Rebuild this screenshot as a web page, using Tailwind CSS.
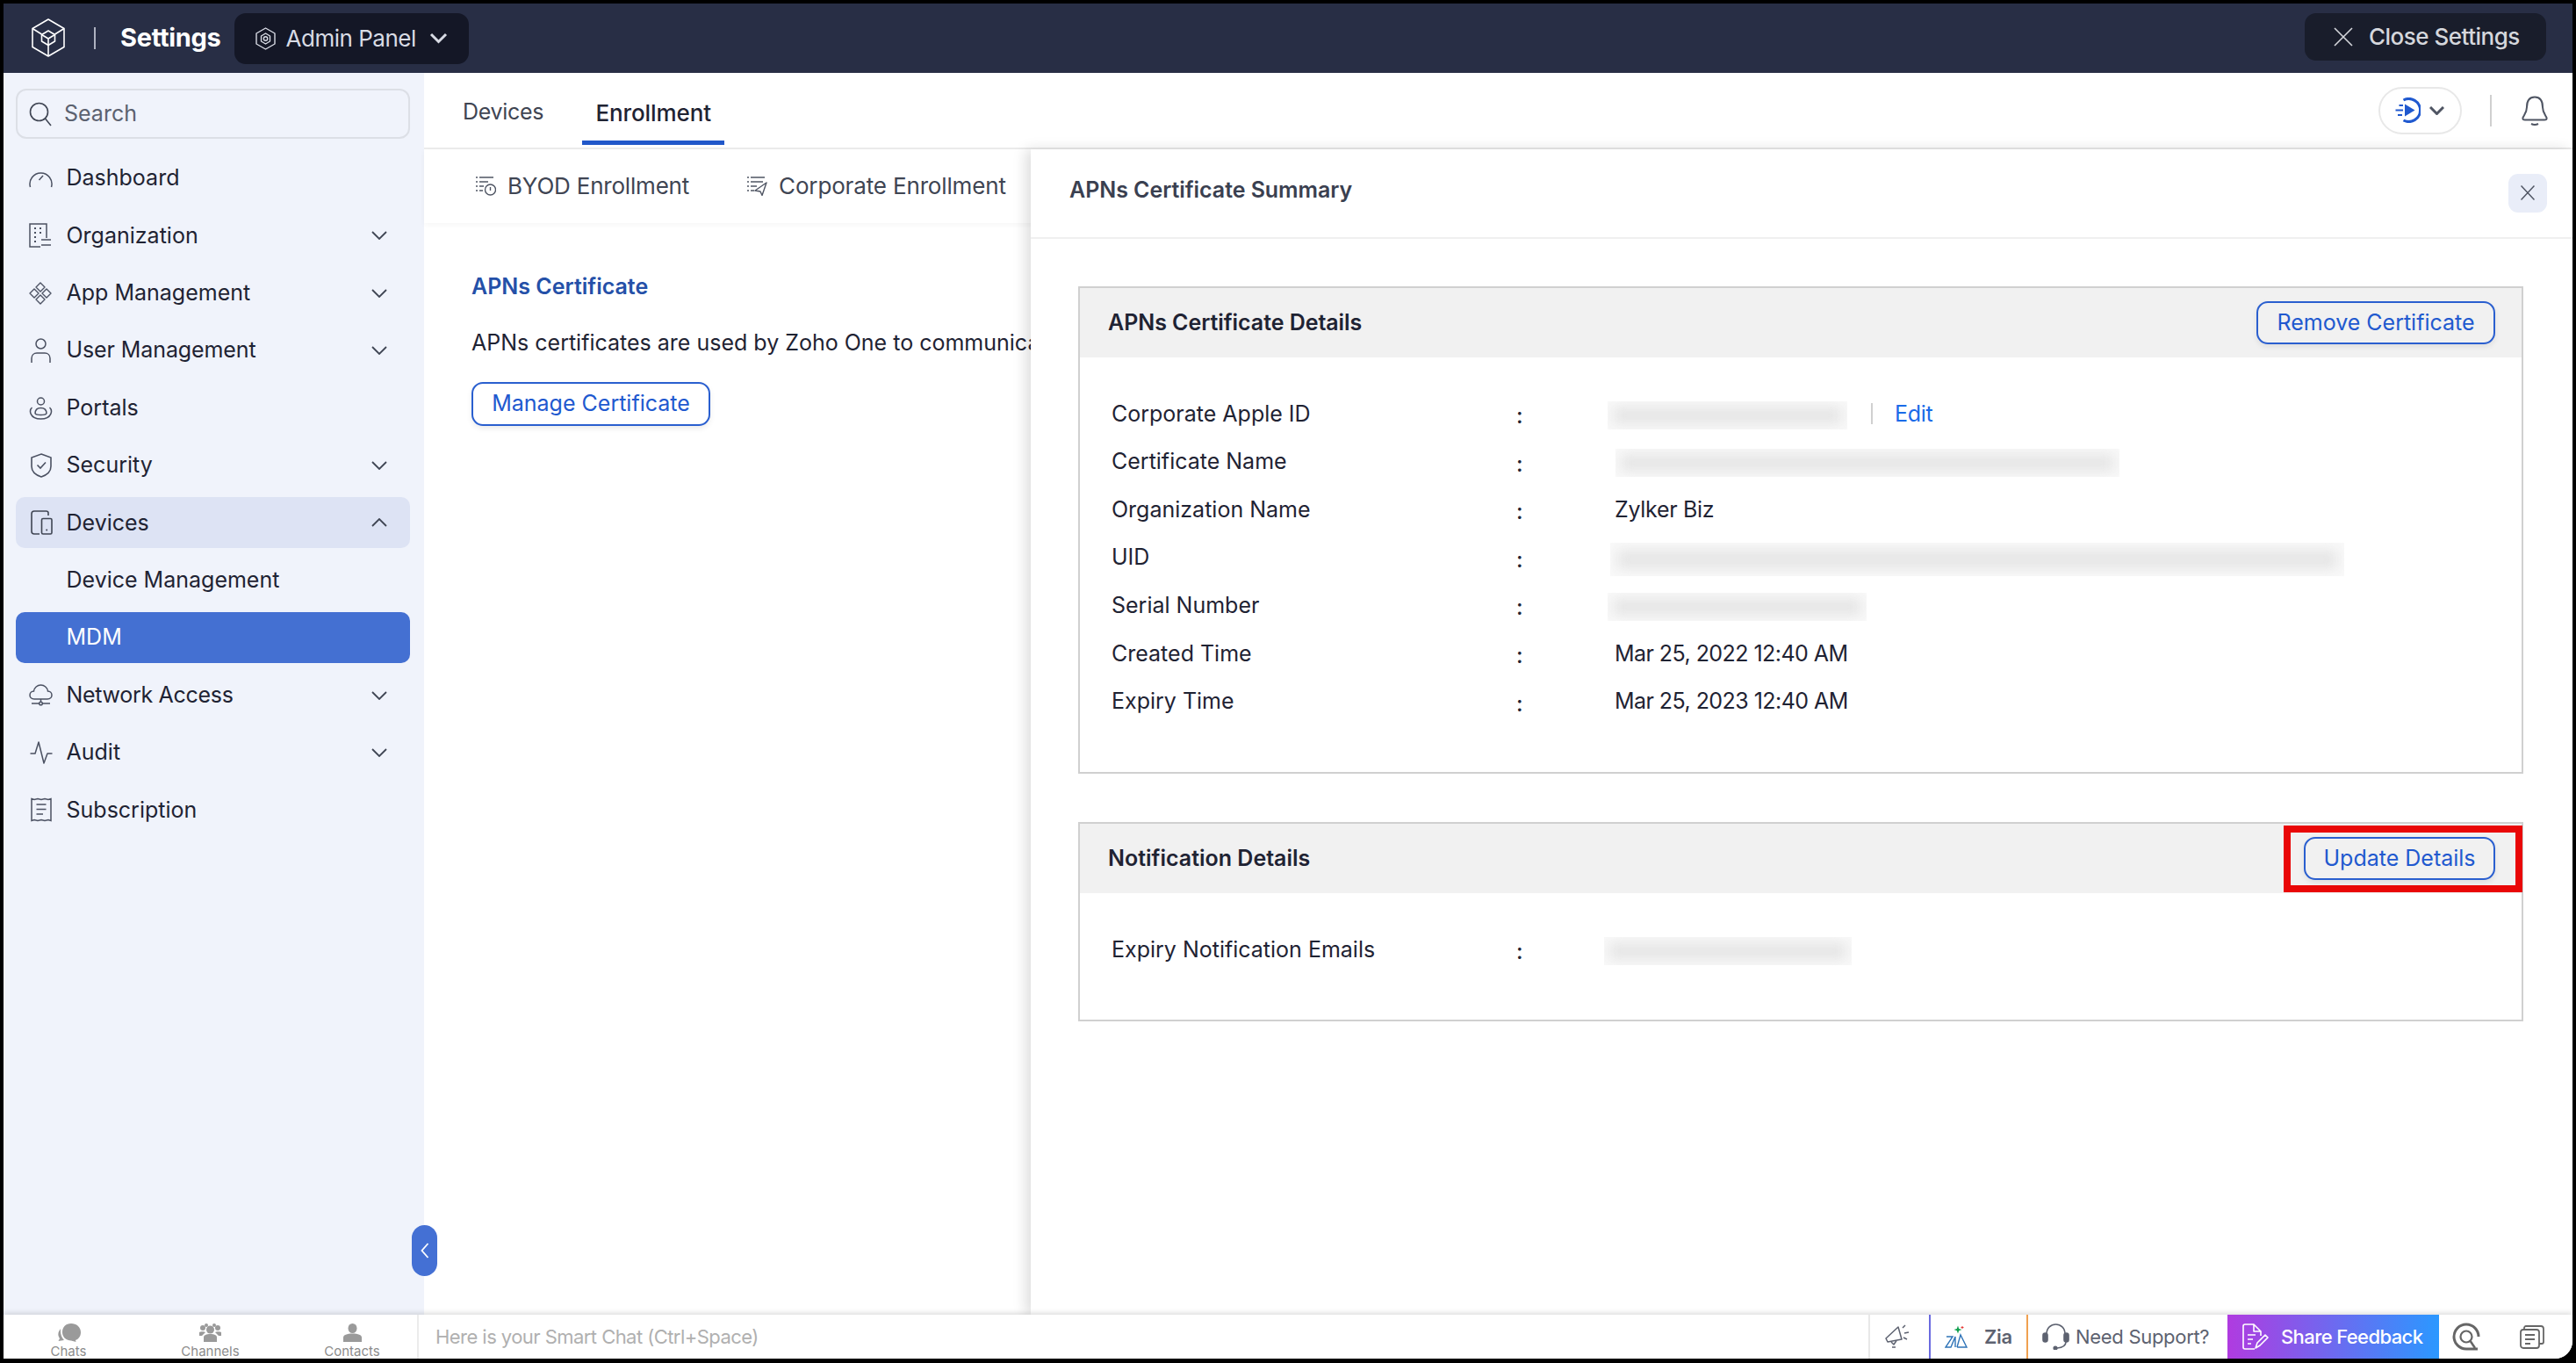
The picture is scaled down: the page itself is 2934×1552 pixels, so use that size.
<!DOCTYPE html>
<html lang="en">
<head>
    <meta charset="UTF-8">
    <title>Settings - MDM</title>
    <script src="https://cdn.jsdelivr.net/npm/@tailwindcss/browser@4"></script>
</head>
<body class="bg-black w-[2934px] h-[1552px] overflow-hidden pt-[4px] pl-[4px] pr-[4px] pb-[5px] font-['Inter',sans-serif] text-[25px] text-[#1f2333]">
<div class="h-full flex flex-col bg-white overflow-hidden rounded-br-[20px]">

    <!-- Top bar -->
    <header class="h-[79px] shrink-0 bg-[#282e45] flex items-center text-white">
        <svg class="ml-[32px] w-[38px] h-[44px] -mt-[2px]" viewBox="0 0 38 44" fill="none" stroke="#fff" stroke-width="1.6" stroke-linejoin="round">
            <path d="M19 1L37 11.5V32.5L19 43L1 32.5V11.5Z"/>
            <path d="M1 11.5L11.5 18M37 11.5L26.5 18M19 43V30.5"/>
            <path d="M19 14L26.5 18.5V26L19 30.5L11.5 26V18.5Z"/>
            <path d="M11.5 18.5L19 23L26.5 18.5M19 23V30.5"/>
        </svg>
        <div class="ml-[33px] w-[2px] h-[25px] bg-[#aeb2c0]"></div>
        <div class="ml-[28px] text-[29px] font-bold tracking-[-0.3px] -mt-[1px]">Settings</div>
        <div class="ml-[15px] w-[267px] h-[58px] rounded-[13px] bg-[#141726] flex items-center pl-[24px] text-[#d8dbe4] text-[26px]">
            <svg class="w-[23px] h-[26px]" viewBox="0 0 23 26" fill="none" stroke="#d8dbe4" stroke-width="1.4" stroke-linejoin="round">
                <path d="M11.5 1L22 7V19L11.5 25L1 19V7Z"/>
                <path d="M11.5 7L16.5 10V16L11.5 19L6.5 16V10Z"/>
                <circle cx="11.5" cy="13" r="2.2"/>
            </svg>
            <span class="ml-[12px] tracking-[-0.5px]">Admin Panel</span>
            <svg class="ml-[15px] w-[21px] h-[13px]" viewBox="0 0 21 13" fill="none" stroke="#d8dbe4" stroke-width="3"><path d="M2 2L10.5 10.5L19 2"/></svg>
        </div>
        <div class="ml-auto mr-[30px] w-[275px] h-[54px] -mt-[4px] rounded-[13px] bg-[#191d2b] flex items-center pl-[33px] text-[#d5d7dc] text-[26px] font-medium">
            <svg class="w-[22px] h-[22px]" viewBox="0 0 22 22" fill="none" stroke="#d5d7dc" stroke-width="1.6"><path d="M1 1L21 21M21 1L1 21"/></svg>
            <span class="ml-[18px] tracking-[-0.5px]">Close Settings</span>
        </div>
    </header>

    <div class="flex-1 flex min-h-0">
        <!-- Sidebar -->
        <aside class="w-[479px] shrink-0 bg-[#f0f3fb] pt-[18px] px-[14px]">
            <div class="w-[449px] h-[57px] border-2 border-[#dcdfe6] rounded-[12px] flex items-center pl-[13px] text-[#5c6270]">
                <svg class="w-[26px] h-[28px]" viewBox="0 0 26 28" fill="none" stroke="#3f4553" stroke-width="1.6"><circle cx="11.5" cy="11.5" r="10"/><path d="M18.5 19L25 27"/></svg>
                <span class="ml-[14px]">Search</span>
            </div>
            <nav class="mt-[16px] flex flex-col gap-[7.4px] w-[449px]">
                <div class="h-[58px] flex items-center rounded-[10px] pl-[15px]">
                    <span class="w-[42.5px] shrink-0">
                        <svg class="w-[27px] h-[22px]" viewBox="0 0 27 22" fill="none" stroke="#4b5162" stroke-width="1.5"><path d="M1.5 21A12.5 12.5 0 1 1 25.5 21"/><path d="M11.5 13L16 8"/></svg>
                    </span>
                    <span>Dashboard</span>
                </div>
                <div class="h-[58px] flex items-center rounded-[10px] pl-[15px]">
                    <span class="w-[42.5px] shrink-0">
                        <svg class="w-[26px] h-[28px]" viewBox="0 0 26 28" fill="none" stroke="#4b5162" stroke-width="1.5"><path d="M20 17V1H1V27H13"/><path d="M6 6h2M12 6h2M6 11h2M12 11h2M6 16h2M6 21h2" stroke-width="2.2"/><path d="M14 19h11M14 25h11" /></svg>
                    </span>
                    <span>Organization</span>
                    <svg class="ml-auto mr-[26px] w-[18px] h-[10px]" viewBox="0 0 18 10" fill="none" stroke="#3f4553" stroke-width="1.8"><path d="M1 1L9 9L17 1"/></svg>
                </div>
                <div class="h-[58px] flex items-center rounded-[10px] pl-[15px]">
                    <span class="w-[42.5px] shrink-0">
                        <svg class="w-[26px] h-[26px]" viewBox="0 0 26 26" fill="none" stroke="#4b5162" stroke-width="1.4" stroke-linejoin="round"><path d="M13 1L18 6L13 11L8 6Z"/><path d="M13 15L18 20L13 25L8 20Z"/><path d="M6 8L11 13L6 18L1 13Z"/><path d="M20 8L25 13L20 18L15 13Z"/></svg>
                    </span>
                    <span>App Management</span>
                    <svg class="ml-auto mr-[26px] w-[18px] h-[10px]" viewBox="0 0 18 10" fill="none" stroke="#3f4553" stroke-width="1.8"><path d="M1 1L9 9L17 1"/></svg>
                </div>
                <div class="h-[58px] flex items-center rounded-[10px] pl-[15px]">
                    <span class="w-[42.5px] shrink-0">
                        <svg class="ml-[2px] w-[23px] h-[28px]" viewBox="0 0 23 28" fill="none" stroke="#4b5162" stroke-width="1.5"><circle cx="11.5" cy="6.5" r="5.5"/><path d="M1 28V23C1 19.5 3.5 17 7 17H16C19.5 17 22 19.5 22 23V28"/></svg>
                    </span>
                    <span class="tracking-[-0.1px]">User Management</span>
                    <svg class="ml-auto mr-[26px] w-[18px] h-[10px]" viewBox="0 0 18 10" fill="none" stroke="#3f4553" stroke-width="1.8"><path d="M1 1L9 9L17 1"/></svg>
                </div>
                <div class="h-[58px] flex items-center rounded-[10px] pl-[15px]">
                    <span class="w-[42.5px] shrink-0">
                        <svg class="w-[27px] h-[26px]" viewBox="0 0 27 26" fill="none" stroke="#4b5162" stroke-width="1.5"><circle cx="13.5" cy="5" r="4"/><path d="M7 19C7 15 9.5 12.5 13.5 12.5C17.5 12.5 20 15 20 19"/><path d="M7 19C9 21 18 21 20 19"/><path d="M3.5 12C0 15 0.5 25 13.5 25C26.5 25 27 15 23.5 12"/></svg>
                    </span>
                    <span>Portals</span>
                </div>
                <div class="h-[58px] flex items-center rounded-[10px] pl-[15px]">
                    <span class="w-[42.5px] shrink-0">
                        <svg class="ml-[2px] w-[24px] h-[28px]" viewBox="0 0 24 28" fill="none" stroke="#4b5162" stroke-width="1.6"><path d="M12 1L23 5V15C23 21 18 25 12 27C6 25 1 21 1 15V5Z"/><path d="M7.5 13.5L11 17L17 10.5"/></svg>
                    </span>
                    <span>Security</span>
                    <svg class="ml-auto mr-[26px] w-[18px] h-[10px]" viewBox="0 0 18 10" fill="none" stroke="#3f4553" stroke-width="1.8"><path d="M1 1L9 9L17 1"/></svg>
                </div>
                <div class="h-[58px] flex items-center rounded-[10px] pl-[15px] bg-[#dde3f4]">
                    <span class="w-[42.5px] shrink-0">
                        <svg class="ml-[2px] w-[25px] h-[28px]" viewBox="0 0 25 28" fill="none" stroke="#3f4553" stroke-width="1.6"><path d="M20 6V3C20 2 19 1 17.5 1H4C2 1 1 2 1 4V24C1 26 2 27 4 27H10"/><rect x="12.5" y="9.5" width="11.5" height="17.5" rx="1.5"/><circle cx="18.2" cy="22.5" r="1" fill="#3f4553" stroke="none"/></svg>
                    </span>
                    <span>Devices</span>
                    <svg class="ml-auto mr-[26px] w-[18px] h-[10px]" viewBox="0 0 18 10" fill="none" stroke="#3f4553" stroke-width="1.8"><path d="M1 9L9 1L17 9"/></svg>
                </div>
                <div class="h-[58px] flex items-center rounded-[10px] pl-[57.5px]">
                    <span>Device Management</span>
                </div>
                <div class="h-[58px] flex items-center rounded-[10px] pl-[57.5px] bg-[#4470d2] text-white">
                    <span>MDM</span>
                </div>
                <div class="h-[58px] flex items-center rounded-[10px] pl-[15px]">
                    <span class="w-[42.5px] shrink-0">
                        <svg class="w-[27px] h-[25px]" viewBox="0 0 27 25" fill="none" stroke="#4b5162" stroke-width="1.5"><path d="M6 17C2.5 17 1 14.5 1 12.5C1 10 3 8 5.5 8C6 4 9.5 1 13.5 1C17.5 1 21 4 21.5 8C24 8 26 10 26 12.5C26 14.5 24.5 17 21 17Z"/><path d="M13.5 17V21M3 22H24"/><circle cx="13.5" cy="22" r="1.8" fill="#f0f3fb"/></svg>
                    </span>
                    <span class="tracking-[-0.3px]">Network Access</span>
                    <svg class="ml-auto mr-[26px] w-[18px] h-[10px]" viewBox="0 0 18 10" fill="none" stroke="#3f4553" stroke-width="1.8"><path d="M1 1L9 9L17 1"/></svg>
                </div>
                <div class="h-[58px] flex items-center rounded-[10px] pl-[15px]">
                    <span class="w-[42.5px] shrink-0">
                        <svg class="ml-[1px] w-[26px] h-[26px]" viewBox="0 0 26 26" fill="none" stroke="#4b5162" stroke-width="1.5" stroke-linejoin="round"><path d="M0.5 14H6L10 1L16 25L20 14H25.5"/></svg>
                    </span>
                    <span>Audit</span>
                    <svg class="ml-auto mr-[26px] w-[18px] h-[10px]" viewBox="0 0 18 10" fill="none" stroke="#3f4553" stroke-width="1.8"><path d="M1 1L9 9L17 1"/></svg>
                </div>
                <div class="h-[58px] flex items-center rounded-[10px] pl-[15px]">
                    <span class="w-[42.5px] shrink-0">
                        <svg class="ml-[2px] w-[24px] h-[28px]" viewBox="0 0 24 28" fill="none" stroke="#4b5162" stroke-width="1.5"><path d="M1 1.5L4 2.5L8 1.5L12 2.5L16 1.5L20 2.5L23 1.5V26.5L20 25.5L16 26.5L12 25.5L8 26.5L4 25.5L1 26.5Z"/><path d="M6.5 8H17.5M6.5 13.5H17.5M6.5 19H14"/></svg>
                    </span>
                    <span>Subscription</span>
                </div>
            </nav>
        </aside>

        <!-- Main area -->
        <main class="relative flex-1 min-w-0">
            <div class="h-[87px] border-b-2 border-[#ececec] flex items-stretch pl-[44px]">
                <div class="flex items-center pt-[5px] text-[#3f4553] tracking-[-0.3px]">Devices</div>
                <div class="ml-[44px] w-[162px] mb-[3px] pt-[13px] border-b-[5px] border-[#2157c9] flex items-center justify-center font-medium text-[26px] tracking-[-0.1px]">Enrollment</div>
                <div class="ml-auto mr-[28px] flex items-center">
                    <div class="w-[95px] h-[54px] rounded-full border-2 border-[#e8e8e8] flex items-center pl-[17px]">
                        <svg class="w-[29px] h-[29px]" viewBox="0 0 29 29" fill="none" stroke="#2059cf"><path d="M9.5 3A13 13 0 1 1 9.5 26" stroke-width="3"/><path d="M11 7.5L22.5 14.5L11 21.5Z" fill="#2059cf" stroke="none"/><path d="M4.5 9H9M0.5 14.5H9M3 20H8" stroke-width="2"/></svg>
                        <svg class="ml-[10px] w-[17px] h-[10px]" viewBox="0 0 17 10" fill="none" stroke="#4f5563" stroke-width="3"><path d="M1 1L8.5 8.5L16 1"/></svg>
                    </div>
                    <div class="ml-[32px] w-[2px] h-[36px] bg-[#d0d0d0]"></div>
                    <svg class="ml-[34px] w-[30px] h-[34px]" viewBox="0 0 30 34" fill="none" stroke="#4f5563" stroke-width="2"><path d="M15 1.5C8 1.5 6 7 6 13C6 19 3 22 1.5 25C1 27 2 27.5 4 27.5H26C28 27.5 29 27 28.5 25C27 22 24 19 24 13C24 7 22 1.5 15 1.5Z"/><path d="M11 32Q15 34 19 32"/></svg>
                </div>
            </div>

            <div class="h-[84px] pb-[2px] flex items-center pl-[59px] text-[#3f4553] text-[26px] shadow-[0_2px_6px_rgba(0,0,0,0.04)]">
                <svg class="w-[23px] h-[22px] mt-[2px]" viewBox="0 0 23 22" fill="none" stroke="#4f5563" stroke-width="1.4"><path d="M0 1H2M4 1H20M0 6H2M4 6H14M0 11H2M4 11H9M0 16H2M4 16H8"/><circle cx="16.5" cy="15" r="6"/><path d="M16.5 12V16"/></svg>
                <span class="ml-[13px] tracking-[-0.2px]">BYOD Enrollment</span>
                <svg class="ml-[66px] w-[23px] h-[22px] mt-[2px]" viewBox="0 0 23 22" fill="none" stroke="#4f5563" stroke-width="1.4" stroke-linejoin="round"><path d="M0 1H2M4 1H20M0 6H2M4 6H18M0 11H2M4 11H11M0 16H2M4 16H8"/><path d="M22 7L9 16L15 17L17 21.5Z"/></svg>
                <span class="ml-[13px] tracking-[-0.15px]">Corporate Enrollment</span>
            </div>

            <div class="pt-[54px] pl-[54px] whitespace-nowrap">
                <div class="font-semibold text-[#2450a8]">APNs Certificate</div>
                <div class="mt-[26px]">APNs certificates are used by Zoho One to communicate with Apple devices.</div>
                <div class="mt-[26px] w-[272px] h-[50px] rounded-[13px] border-2 border-[#2a5fcf] text-[#2159cf] flex items-center justify-center shadow-[0_3px_6px_rgba(0,0,0,0.08)]">Manage Certificate</div>
            </div>

            <!-- Collapse handle -->
            <div class="absolute left-[-14px] top-[1312px] w-[29px] h-[58px] rounded-full bg-[#4470d4] flex items-center justify-center">
                <svg class="w-[10px] h-[18px]" viewBox="0 0 10 18" fill="none" stroke="#fff" stroke-width="1.8"><path d="M8.5 1L1.5 9L8.5 17"/></svg>
            </div>

            <!-- Summary panel -->
            <section class="absolute left-[691px] top-[87px] right-0 bottom-0 bg-white shadow-[-6px_0_14px_rgba(0,0,0,0.13)]">
                <div class="h-[102px] border-b-2 border-[#f0f0f0] flex items-center justify-between pl-[44px] pr-[29px]">
                    <span class="font-semibold text-[#3a4050] tracking-[-0.05px] -mt-[7px]">APNs Certificate Summary</span>
                    <div class="w-[44px] h-[44px] rounded-[11px] bg-[#e9edf8] flex items-center justify-center -mt-[1px]">
                        <svg class="w-[16px] h-[17px]" viewBox="0 0 16 17" fill="none" stroke="#4f5563" stroke-width="1.5"><path d="M0.5 0.5L15.5 16.5M15.5 0.5L0.5 16.5"/></svg>
                    </div>
                </div>

                <div class="pt-[54px] pl-[54px] pr-[56px] flex flex-col gap-[55px]">
                    <div class="h-[555px] border-2 border-[#d0d0d0]">
                        <div class="h-[79px] bg-[#f1f1f1] flex items-center justify-between pl-[32px] pr-[30px]">
                            <span class="font-semibold tracking-[-0.05px]">APNs Certificate Details</span>
                            <div class="w-[272px] h-[49px] rounded-[13px] border-2 border-[#2a5fcf] text-[#2159cf] flex items-center justify-center shadow-[0_3px_6px_rgba(0,0,0,0.08)]">Remove Certificate</div>
                        </div>
                        <div class="pt-[37px] pl-[36px] grid grid-cols-[461px_113px_1fr] auto-rows-[54.6px] items-center">
                            <div>Corporate Apple ID</div>
                            <div class="mt-[5px] font-medium">:</div>
                            <div class="flex items-center -ml-[9px]">
                                <div class="w-[273px] h-[32px] overflow-hidden bg-[#f9f9f9] mt-[3px]"><div class="m-[6px] h-[20px] bg-[#e6e6e6] blur-[7px]"></div></div>
                                <div class="ml-[27px] w-[2px] h-[24px] bg-[#d0d0d0]"></div>
                                <span class="ml-[25px] text-[#1a6be8] tracking-[-0.3px]">Edit</span>
                            </div>
                            <div>Certificate Name</div>
                            <div class="mt-[5px] font-medium">:</div>
                            <div class="w-[574px] h-[32px] overflow-hidden bg-[#f9f9f9] mt-[3px]"><div class="m-[6px] h-[20px] bg-[#e6e6e6] blur-[7px]"></div></div>
                            <div>Organization Name</div>
                            <div class="mt-[5px] font-medium">:</div>
                            <div class="-ml-[1px] tracking-[-0.3px]">Zylker Biz</div>
                            <div>UID</div>
                            <div class="mt-[5px] font-medium">:</div>
                            <div class="-ml-[6px] w-[836px] h-[38px] overflow-hidden bg-[#f9f9f9] mt-[3px]"><div class="m-[8px] h-[22px] bg-[#e6e6e6] blur-[7px]"></div></div>
                            <div>Serial Number</div>
                            <div class="mt-[5px] font-medium">:</div>
                            <div class="-ml-[9px] w-[295px] h-[32px] overflow-hidden bg-[#f9f9f9] mt-[3px]"><div class="m-[6px] h-[20px] bg-[#e6e6e6] blur-[7px]"></div></div>
                            <div>Created Time</div>
                            <div class="mt-[5px] font-medium">:</div>
                            <div class="-ml-[1px] tracking-[-0.55px]">Mar 25, 2022 12:40 AM</div>
                            <div>Expiry Time</div>
                            <div class="mt-[5px] font-medium">:</div>
                            <div class="-ml-[1px] tracking-[-0.55px]">Mar 25, 2023 12:40 AM</div>
                        </div>
                    </div>

                    <div class="h-[227px] border-2 border-[#d0d0d0]">
                        <div class="relative h-[79px] bg-[#f1f1f1] flex items-center justify-between pl-[32px] pr-[30px]">
                            <span class="font-semibold">Notification Details</span>
                            <div class="w-[218px] h-[49px] rounded-[13px] border-2 border-[#2a5fcf] text-[#2159cf] flex items-center justify-center shadow-[0_3px_6px_rgba(0,0,0,0.08)]">Update Details</div>
                            <!-- Red callout -->
                            <div class="absolute top-[2px] right-[-1px] w-[272px] h-[76px] border-[8px] border-[#e90707]"></div>
                        </div>
                        <div class="pt-[37px] pl-[36px] grid grid-cols-[461px_113px_1fr] auto-rows-[54.6px] items-center">
                            <div>Expiry Notification Emails</div>
                            <div class="mt-[5px] font-medium">:</div>
                            <div class="-ml-[13px] w-[282px] h-[32px] overflow-hidden bg-[#f9f9f9] mt-[3px]"><div class="m-[6px] h-[20px] bg-[#e6e6e6] blur-[7px]"></div></div>
                        </div>
                    </div>
                </div>
            </section>
        </main>
    </div>

    <!-- Bottom bar -->
    <footer class="relative z-10 h-[50px] shrink-0 bg-white flex shadow-[0_-2px_6px_rgba(0,0,0,0.14)]">
        <div class="w-[473px] shrink-0 border-r-2 border-[#ececec] flex gap-[13.5px] text-[15px] leading-[16px] text-[#8c8c8c]">
            <div class="w-[148px] flex flex-col items-center pt-[10px]">
                <svg class="w-[27px] h-[21px]" viewBox="0 0 27 21" fill="#9a9a9a"><path d="M16 0C22 0 27 4 27 10C27 15 24 18 21 19L21.5 21L16 19.5C10 19.5 6 15 6 10C6 4 10 0 16 0Z"/><path d="M4 6C1.5 9 0 13 3 17L1.5 20L8 19C5 16 3.5 11 4 6Z"/></svg>
                <span class="mt-[3px]">Chats</span>
            </div>
            <div class="w-[148px] flex flex-col items-center pt-[10px]">
                <svg class="w-[25px] h-[21px]" viewBox="0 0 25 21" fill="#9a9a9a"><circle cx="12.5" cy="7" r="4.5"/><circle cx="4" cy="5" r="3"/><circle cx="21" cy="5" r="3"/><circle cx="8" cy="2" r="2"/><circle cx="17" cy="2" r="2"/><path d="M5 21V16C5 13 8 12 12.5 12C17 12 20 13 20 16V21Z"/><path d="M0 10C1 9 6 9 7 10L3 14H0Z"/><path d="M25 10C24 9 19 9 18 10L22 14H25Z"/></svg>
                <span class="mt-[3px]">Channels</span>
            </div>
            <div class="w-[148px] flex flex-col items-center pt-[10px]">
                <svg class="w-[21px] h-[21px]" viewBox="0 0 21 21" fill="#9a9a9a"><ellipse cx="10.5" cy="5.5" rx="5" ry="5.5"/><path d="M0 21V16C0 13 4 11.5 10.5 11.5C17 11.5 21 13 21 16V21Z"/></svg>
                <span class="mt-[3px]">Contacts</span>
            </div>
        </div>
        <div class="pl-[19px] flex items-center text-[22px] text-[#b0b0b0] tracking-[-0.55px]">Here is your Smart Chat (Ctrl+Space)</div>
        <div class="ml-auto flex items-stretch">
            <div class="w-[69px] border-l-2 border-[#e8e8e8] flex items-center pl-[17px]">
                <svg class="w-[30px] h-[28px]" viewBox="0 0 30 28" fill="none" stroke="#5d6270" stroke-width="1.5" stroke-linejoin="round"><path d="M1 16L15 3L19 17L3 20Z"/><path d="M7 20L10 23L13 18.5M8 26H12"/><path d="M20 4L23 1M22 10L27 9M21 15L25 17"/></svg>
            </div>
            <div class="w-[111px] border-l-2 border-[#6a6ae0] flex items-center pl-[16px]">
                <svg class="w-[26px] h-[26px]" viewBox="0 0 26 26" fill="none" stroke="#2f74b8" stroke-width="1.4"><path d="M2 13H9L1 25H7L12 13V25M14 25L18 11L25 25H14"/><path d="M15 0.5L16.2 4L19.5 5L16.2 6.2L15 9.5L13.8 6.2L10.5 5L13.8 4Z" fill="#12a150" stroke="none"/><path d="M20 1V4M18.5 2.5H21.5" stroke="#e53935" stroke-width="1"/></svg>
                <span class="ml-[19px] text-[22px] font-semibold text-[#5d6270] tracking-[-0.3px]">Zia</span>
            </div>
            <div class="w-[229px] border-l-2 border-[#f0a050] flex items-center pl-[16px]">
                <svg class="w-[31px] h-[30px]" viewBox="0 0 31 30" fill="none" stroke="#5d6270" stroke-width="1.6"><path d="M5 12C5 5 10 1 15.5 1C21 1 26 5 26 12"/><rect x="1" y="11" width="5" height="10" rx="2.5" fill="#5d6270"/><rect x="25" y="11" width="5" height="10" rx="2.5" fill="#5d6270"/><path d="M27 21C27 25 23 27.5 17 28"/><circle cx="15" cy="28" r="1.8" fill="#5d6270"/></svg>
                <span class="ml-[7px] text-[22px] text-[#5d6270] tracking-[-0.3px]">Need Support?</span>
            </div>
            <div class="w-[241px] bg-[linear-gradient(90deg,#b03be0,#2b98ff)] flex items-center pl-[17px] text-white">
                <svg class="w-[30px] h-[30px]" viewBox="0 0 30 30" fill="none" stroke="#fff" stroke-width="1.6" stroke-linejoin="round"><path d="M14 29H3C2 29 1 28 1 27V3C1 2 2 1 3 1H13L21 9V14M13 1V9H21"/><path d="M6 13H15M6 18H12M6 23H10"/><path d="M15 28L17 22L26 13L29 16L20 25Z"/></svg>
                <span class="ml-[14px] text-[22px] font-medium tracking-[-0.6px]">Share Feedback</span>
            </div>
            <div class="w-[152px] flex items-center pl-[15px]">
                <svg class="w-[32px] h-[32px]" viewBox="0 0 32 32" fill="none" stroke="#666" stroke-width="3"><path d="M29 30H16A14 14 0 1 1 30 16"/><circle cx="16" cy="16" r="6.5" stroke-width="2.2"/><path d="M20 20L26 29" stroke-width="2.5"/></svg>
                <svg class="ml-[45px] w-[28px] h-[27px]" viewBox="0 0 28 27" fill="none" stroke="#666" stroke-width="1.8" stroke-linejoin="round"><rect x="1" y="5" width="21" height="21" rx="3"/><path d="M5 5V3C5 2 6 1 7 1H24C26 1 27 2 27 4V19C27 20 26 21 25 21H22"/><path d="M6 11H17M6 16H17M6 21H12"/></svg>
            </div>
        </div>
    </footer>
</div>
</body>
</html>
